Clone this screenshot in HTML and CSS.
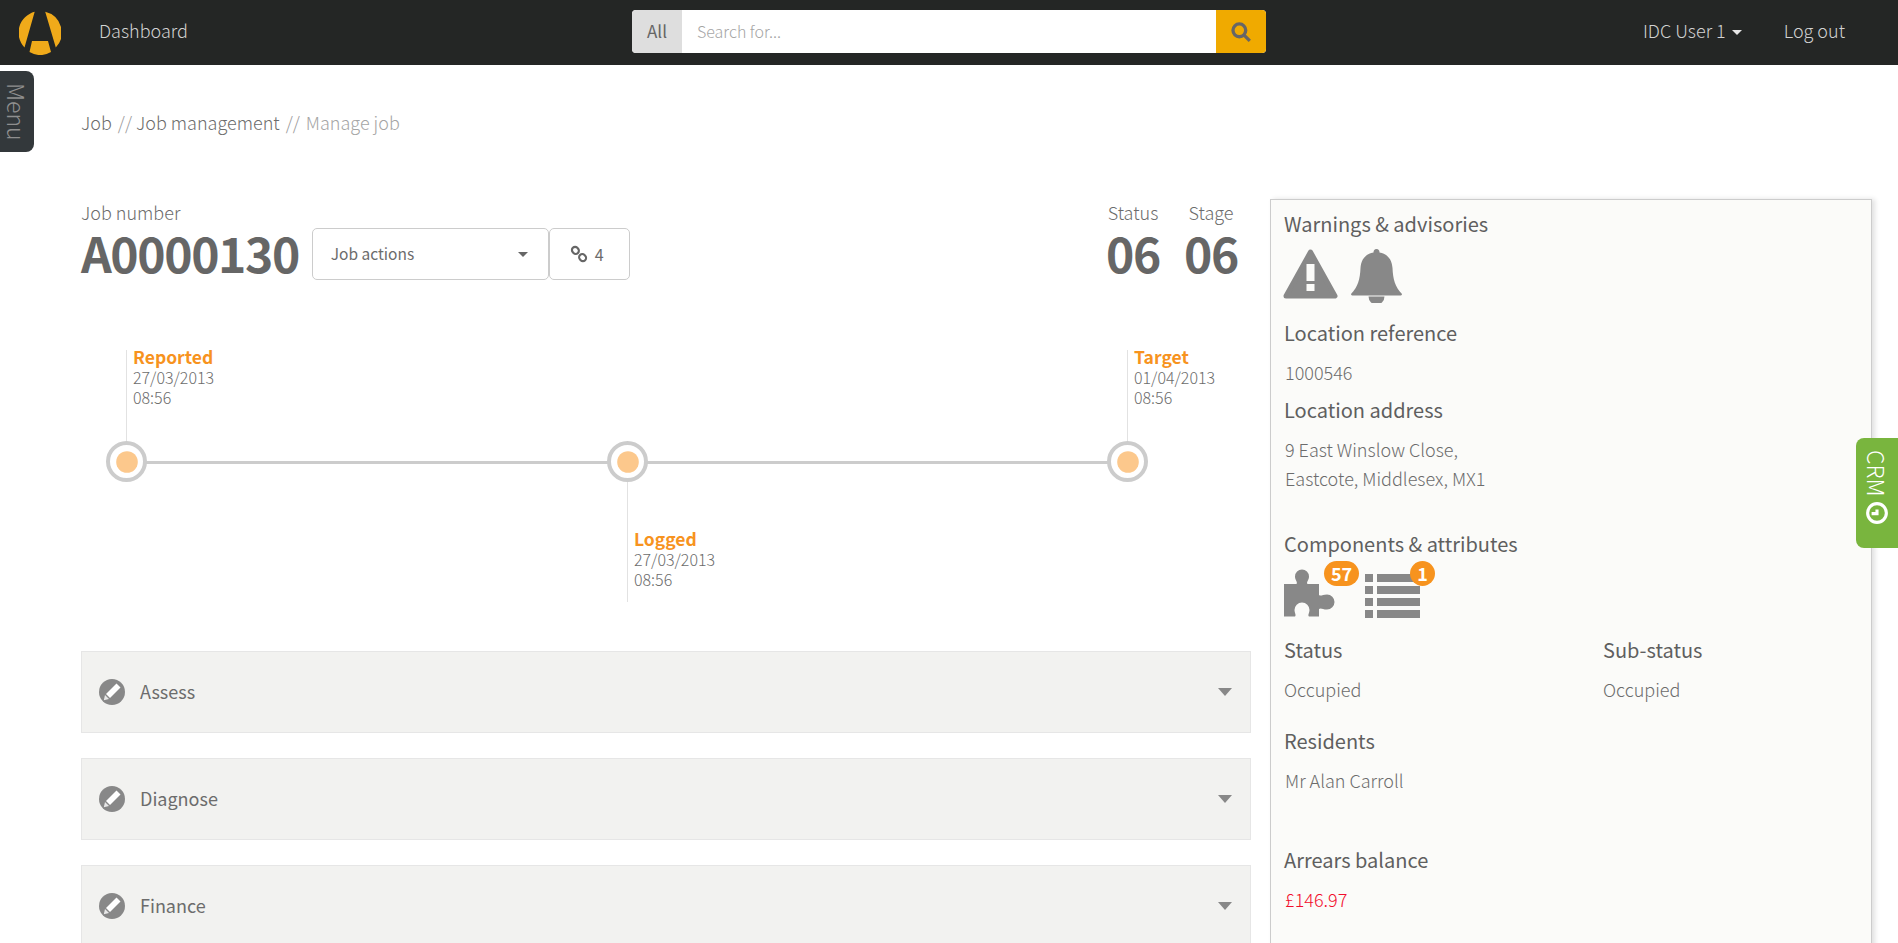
FILE: index.html
```html
<!DOCTYPE html>
<html lang="en">
<head>
<meta charset="utf-8">
<title>Manage job</title>
<link rel="stylesheet" href="styles.css">
</head>
<body>
<header class="nav">
  <svg class="logo" viewBox="0 0 42 44"><path d="M15.7.8A21.5 21.5 0 0 0 5.5 36.5ZM26.2.8A21.5 21.5 0 0 1 36.8 36.5ZM13 30H29L32 41A21.5 21.5 0 0 1 10.5 41Z"/></svg>
  <a class="nav-link dash">Dashboard</a>
  <div class="search">
    <span class="search-all">All</span>
    <span class="search-input">Search for...</span>
    <span class="search-btn"><svg viewBox="0 0 20 20"><circle cx="8.5" cy="8.5" r="5.8"/><path d="M12.8 12.8 18 18"/></svg></span>
  </div>
  <div class="nav-right">
    <a class="nav-link">IDC User 1 <i class="nav-caret"></i></a>
    <a class="nav-link">Log out</a>
  </div>
</header>

<div class="tab-menu">Menu</div>
<div class="tab-crm">
  <span>CRM</span>
  <svg viewBox="0 0 20 20"><circle cx="10" cy="10" r="7.8"/><path d="M5.5 10.5H10V7"/></svg>
</div>

<div class="page">
  <nav class="crumbs"><span>Job</span><i>//</i><span>Job management</span><i>//</i><span class="crumb-now">Manage job</span></nav>
  <div class="columns">
    <main class="main">
      <section class="head">
        <div class="job">
          <div class="label">Job number</div>
          <div class="job-row">
            <div class="big">A0000130</div>
            <div class="job-actions"><span>Job actions</span> <i class="caret"></i></div>
            <div class="job-links"><svg viewBox="0 0 20 20"><rect x="2" y="2.500" width="8" height="7" rx="3.500" transform="rotate(45 6 6)"/><rect x="10" y="10.500" width="8" height="7" rx="3.500" transform="rotate(45 14 14)"/></svg>4</div>
          </div>
        </div>
        <div class="stat"><div class="label">Status</div><div class="big">06</div></div>
        <div class="stat stat-stage"><div class="label">Stage</div><div class="big">06</div></div>
      </section>

      <section class="timeline">
        <div class="track"></div>
        <div class="point point-a"><div class="stem"></div><div class="dot"></div><div class="event"><b>Reported</b><span>27/03/2013</span><span>08:56</span></div></div>
        <div class="point point-b"><div class="dot"></div><div class="stem"></div><div class="event"><b>Logged</b><span>27/03/2013</span><span>08:56</span></div></div>
        <div class="point point-c"><div class="stem"></div><div class="dot"></div><div class="event"><b>Target</b><span>01/04/2013</span><span>08:56</span></div></div>
      </section>

      <section class="accordion">
        <div class="acc"><svg class="pen" viewBox="0 0 26 26"><circle cx="13" cy="13" r="13"/><path class="pen-body" d="M17.500 4.500 21.500 8.500 11 19 7 15Z"/><path class="pen-tip" d="M6 16 10 20 4.800 21.200Z"/></svg><span>Assess</span><i class="acc-caret"></i></div>
        <div class="acc"><svg class="pen" viewBox="0 0 26 26"><circle cx="13" cy="13" r="13"/><path class="pen-body" d="M17.500 4.500 21.500 8.500 11 19 7 15Z"/><path class="pen-tip" d="M6 16 10 20 4.800 21.200Z"/></svg><span>Diagnose</span><i class="acc-caret"></i></div>
        <div class="acc"><svg class="pen" viewBox="0 0 26 26"><circle cx="13" cy="13" r="13"/><path class="pen-body" d="M17.500 4.500 21.500 8.500 11 19 7 15Z"/><path class="pen-tip" d="M6 16 10 20 4.800 21.200Z"/></svg><span>Finance</span><i class="acc-caret"></i></div>
      </section>
    </main>

    <aside class="side">
      <h3 class="title">Warnings &amp; advisories</h3>
      <div class="icons-warn">
        <svg class="ico-warn" viewBox="0 0 55 50"><path class="solid" d="M27.5 3 52 47H3Z"/><rect class="hole" x="23.5" y="15" width="8" height="17"/><rect class="hole" x="23.5" y="35" width="8" height="7"/></svg>
        <svg class="ico-bell" viewBox="0 0 51 54"><path class="solid" d="M25.5 0C23.5 0 22.5 1.500 22.500 3.500C14 5 10 11 9.500 19C9 30 7 38 0 45C0 46 1 46.500 2 46.500H49C50 46.500 51 46 51 45C44 38 42 30 41.500 19C41 11 37 5 28.500 3.500C28.500 1.500 27.500 0 25.500 0Z"/><path class="solid" d="M17.500 47.500A8 8 0 0 0 33.500 47.500Z"/></svg>
      </div>
      <h3 class="sub first">Location reference</h3>
      <p class="val">1000546</p>
      <h3 class="sub loc">Location address</h3>
      <p class="val addr">9 East Winslow Close,<br>Eastcote, Middlesex, MX1</p>
      <h3 class="title comp">Components &amp; attributes</h3>
      <div class="icons-comp">
        <div class="ico-box box-puzzle">
          <svg class="ico-puzzle" viewBox="0 0 51 48"><path class="solid" d="M0 15H12.500C14 13 11 11.500 11 7.500A7 7 0 0 1 25 7.500C25 11.500 22 13 23.500 15H35V26C37 27.500 38.500 25.500 43 25.500A7.500 7.500 0 0 1 43 40.500C38.500 40.500 37 38.500 35 40V47.500H25C23.500 46 25.500 44 25.500 41A7.500 7.500 0 0 0 10.500 41C10.500 44 12.500 46 11 47.500H0Z"/></svg>
          <b class="badge badge-wide">57</b>
        </div>
        <div class="ico-box box-list">
          <div class="list-ico"><i></i><u></u><i></i><u></u><i></i><u></u><i></i><u></u></div>
          <b class="badge">1</b>
        </div>
      </div>
      <div class="pair">
        <div><h3 class="sub">Status</h3><p class="val">Occupied</p></div>
        <div><h3 class="sub">Sub-status</h3><p class="val">Occupied</p></div>
      </div>
      <h3 class="sub res">Residents</h3>
      <p class="val">Mr Alan Carroll</p>
      <h3 class="sub arr">Arrears balance</h3>
      <p class="val red">£146.97</p>
    </aside>
  </div>
</div>
</body>
</html>
```
FILE: styles.css
```css
* { box-sizing: border-box; }
html, body { margin: 0; height: 943px; overflow: hidden; }
body {
  position: relative;
  background: #fff;
  color: #6c6c6c;
  font-family: "Noto Sans CJK JP", "Noto Sans", sans-serif;
  font-size: 18px;
  font-weight: 300;
}
.nav {
  height: 65px;
  background: #242625;
  display: flex;
  align-items: center;
  position: relative;
}
.logo { width: 42px; height: 44px; margin-left: 19px; fill: #f0aa1a; }
.nav-link { color: #d2d2d2; font-size: 18px; padding-bottom: 5px; }
.dash { margin-left: 38px; }
.search {
  position: absolute;
  left: 632px;
  top: 10px;
  width: 634px;
  height: 43px;
  display: flex;
  border-radius: 4px;
  overflow: hidden;
  background: #fff;
}
.search-all {
  width: 50px;
  background: #dedede;
  color: #666;
  font-weight: 400;
  font-size: 17px;
  padding-bottom: 2px;
  display: flex;
  align-items: center;
  justify-content: center;
}
.search-input {
  flex: 1;
  padding: 0 0 2px 15px;
  display: flex;
  align-items: center;
  color: #a5a5a5;
  font-size: 16px;
}
.search-btn {
  width: 50px;
  background: #f0aa00;
  display: flex;
  align-items: center;
  justify-content: center;
}
.search-btn svg { width: 22px; height: 22px; fill: none; stroke: #666; stroke-width: 3; }
.nav-right { margin-left: auto; margin-right: 53px; display: flex; gap: 42px; }
.nav-caret {
  display: inline-block;
  border: 5px solid transparent;
  border-top-color: #e6e6e6;
  border-bottom: 0;
  vertical-align: 3px;
  margin-left: 2px;
}
.tab-menu {
  position: absolute;
  left: 0;
  top: 71px;
  width: 34px;
  height: 81px;
  padding-right: 1px;
  background: #33383b;
  border-radius: 0 8px 8px 0;
  color: #8f8f8f;
  font-size: 23px;
  writing-mode: vertical-rl;
  display: flex;
  align-items: center;
  justify-content: center;
}
.tab-crm {
  position: absolute;
  right: 0;
  top: 438px;
  width: 42px;
  height: 110px;
  background: #79b53e;
  border-radius: 8px 0 0 8px;
  color: #fff;
  display: flex;
  flex-direction: column;
  align-items: center;
  padding-top: 12px;
  gap: 4px;
  z-index: 2;
}
.tab-crm span { writing-mode: vertical-rl; font-size: 23px; line-height: 22px; }
.tab-crm svg { width: 24px; height: 24px; fill: none; stroke: #fff; stroke-width: 2.6; }
.page { padding: 0 0 0 81px; }
.crumbs { height: 120px; padding-top: 45px; display: flex; gap: 6px; font-size: 18px; line-height: 24px; }
.crumbs i { font-style: normal; color: #999; margin-right: -2px; }
.crumbs i:last-of-type { margin-right: 0; }
.crumb-now { color: #a5a5a5; }
.columns { display: flex; padding-top: 14px; align-items: flex-start; }
.main { width: 1170px; }
.head { display: flex; height: 96px; padding-top: 1px; }
.job { flex: 1; }
.label { font-size: 18px; line-height: 24px; }
.big { font-size: 48px; font-weight: 700; line-height: 48px; letter-spacing: -1.4px; color: #666; }
.job-row { display: flex; align-items: flex-start; margin-top: 4px; }
.job-row .big { margin-right: 13px; }
.job-actions {
  width: 237px;
  height: 52px;
  border: 1px solid #ccc;
  border-radius: 5px;
  display: flex;
  align-items: center;
  justify-content: space-between;
  padding: 0 20px 0 18px;
  font-size: 15.5px;
  font-weight: 400;
}
.job-actions span { padding-bottom: 2px; }
.caret { border: 5px solid transparent; border-top-color: #666; border-bottom: 0; }
.job-links {
  width: 81px;
  height: 52px;
  border: 1px solid #ccc;
  border-radius: 5px;
  display: flex;
  align-items: center;
  justify-content: center;
  gap: 7px;
  padding-right: 5px;
  font-size: 16px;
  font-weight: 400;
}
.job-links svg { width: 18px; height: 18px; fill: none; stroke: #666; stroke-width: 2.4; }
.stat { text-align: center; width: 56px; }
.stat-stage { margin: 0 12px 0 22px; }
.stat .big { margin-top: 4px; }
.timeline { position: relative; height: 356px; }
.track { position: absolute; left: 46px; width: 1001px; top: 166px; height: 3px; background: #ccc; }
.point { position: absolute; width: 41px; }
.point-a { left: 25px; }
.point-b { left: 526px; }
.point-c { left: 1026px; }
.stem { width: 1px; margin-left: 20px; background: #e2e2e2; height: 91px; }
.point-b .stem { height: 120px; }
.dot { width: 41px; height: 41px; border: 4px solid #ccc; border-radius: 50%; background: #fff; position: relative; }
.dot::after { content: ""; position: absolute; left: 7.500px; top: 7.500px; width: 18px; height: 18px; transform: scale(1.2); border-radius: 50%; background: #fcc88c; }
.point-a, .point-c { top: 55px; }
.point-b { top: 146px; }
.event { position: absolute; left: 27px; top: -4px; width: 120px; display: flex; flex-direction: column; font-size: 16px; line-height: 20px; }
.event b { color: #f7931e; font-size: 17.5px; font-weight: 700; line-height: 21px; }
.point-b .event { top: 87px; }
.accordion { display: flex; flex-direction: column; gap: 25px; }
.acc {
  height: 82px;
  background: #f2f2f0;
  border: 1px solid #e6e6e6;
  display: flex;
  align-items: center;
  padding: 0 18px 0 17px;
  font-size: 18px;
  font-weight: 400;
}
.acc span { flex: 1; margin-left: 15px; padding-bottom: 3px; }
.pen { width: 26px; height: 26px; fill: #888; }
.pen-body { fill: #fff; }
.pen-tip { fill: #e8e8e8; }
.acc-caret { border: 7px solid transparent; border-top: 8px solid #888; border-bottom: 0; }
.side {
  width: 602px;
  height: 800px;
  margin-left: 19px;
  background: #fbfbf9;
  border: 1px solid #ccc;
  box-shadow: 3px 0 5px rgba(0, 0, 0, .12);
  padding: 0 13px;
  flex: none;
}
.title { margin: 0; font-size: 20px; font-weight: 400; line-height: 28px; color: #5f5f5f; padding-top: 10px; height: 38px; }
.sub { margin: 0; font-size: 20px; font-weight: 400; line-height: 28px; color: #5f5f5f; }
.val { margin: 11px 0 0; font-size: 18px; line-height: 29px; padding-left: 1px; }
.icons-warn { display: flex; gap: 13px; margin-top: 11px; height: 58px; margin-left: -1px; }
.ico-warn { width: 55px; height: 50px; }
.ico-bell { width: 51px; height: 54px; }
.solid { fill: #888; stroke: #888; }
.ico-warn .solid { stroke-width: 5; stroke-linejoin: round; }
.ico-bell .solid, .ico-puzzle .solid { stroke-width: 0; }
.hole { fill: #fbfbf9; }
.first { margin-top: 12px; }
.loc { margin-top: 9px; }
.comp { margin-top: 27px; }
.icons-comp { display: flex; margin-top: 6px; height: 58px; }
.ico-box { position: relative; }
.box-puzzle { width: 81px; padding-top: 5px; }
.ico-puzzle { width: 51px; height: 48px; }
.box-list { padding-top: 10px; }
.list-ico { display: grid; grid-template-columns: 8px 43px; column-gap: 4px; row-gap: 4px; width: 55px; }
.list-ico i, .list-ico u { display: block; height: 8px; background: #888; }
.badge {
  position: absolute;
  top: -3px;
  left: 45px;
  min-width: 25px;
  height: 25px;
  padding: 0 5px;
  border-radius: 13px;
  background: #f7931e;
  color: #fff;
  font-size: 18px;
  font-weight: 700;
  line-height: 25px;
  text-align: center;
}
.badge-wide { left: 40px; width: 35px; }
.pair { display: grid; grid-template-columns: 319px 1fr; margin-top: 14px; height: 91px; }
.pair .val { padding-left: 0; }
.arr { margin-top: 51px; }
.red { color: #f20d2d; }
```
